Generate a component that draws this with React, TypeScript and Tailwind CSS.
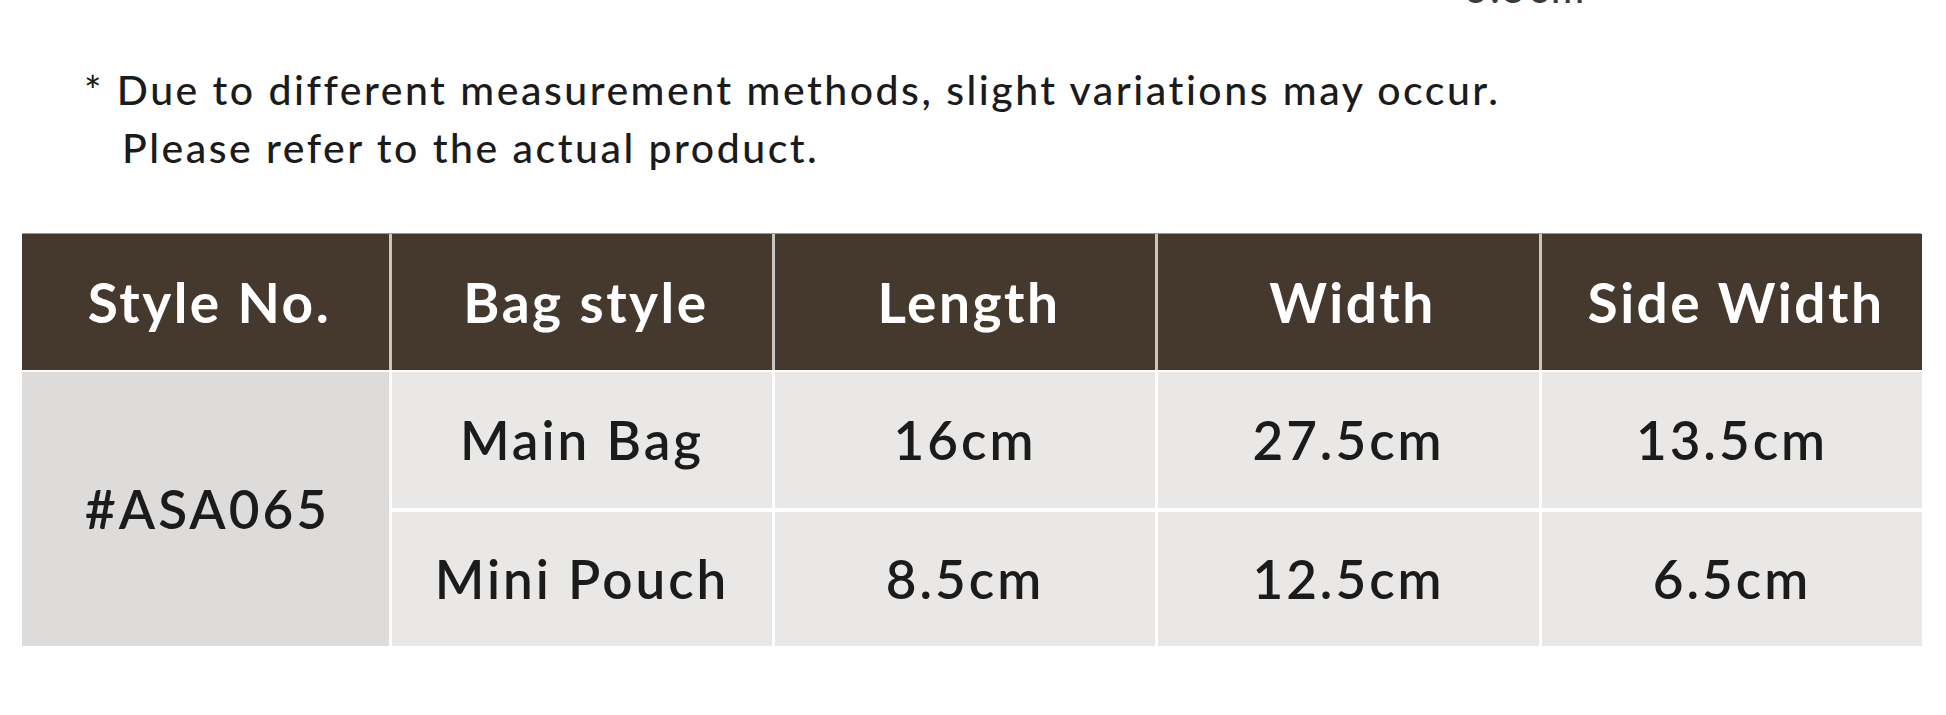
import { FC, Fragment } from 'react';

const columns = ['Style No.', 'Bag style', 'Length', 'Width', 'Side Width'];

const rows = [
  { style: 'Main Bag', length: '16cm', width: '27.5cm', side: '13.5cm' },
  { style: 'Mini Pouch', length: '8.5cm', width: '12.5cm', side: '6.5cm' },
];

const gridCols = 'grid-cols-[367px_380px_380px_381px_380px]';
const bodyCell =
  'bg-[#e9e8e6] flex items-center justify-center text-[53px] font-semibold tracking-[3px]';

const App: FC = () => {
  return (
    <div className="w-[1946px] h-[715px] bg-white overflow-hidden font-['Lato','Liberation_Sans',sans-serif] text-[#1b1b1b]">
      {/* cut-off value from the block above */}
      <div className="h-[5px] overflow-hidden pl-[1464px]">
        <div className="-mt-[32px] text-[40px] leading-[40px] font-medium tracking-[3px] text-[#3a3a3a]">
          6.5cm
        </div>
      </div>

      {/* Note */}
      <div className="pt-[56px] pl-[84px] text-[41px] leading-[58px] font-medium tracking-[2.5px]">
        <p>* Due to different measurement methods, slight variations may occur.</p>
        <p className="pl-[38px]">Please refer to the actual product.</p>
      </div>

      {/* Size table */}
      <div className="ml-[22px] mt-[56px] w-[1899px]">
        <div className={`grid ${gridCols} gap-x-[3px] bg-[#c9c5c1] border-t border-[#9d9892]`}>
          {columns.map((col) => (
            <div
              key={col}
              className="h-[136px] bg-[#45392e] flex items-center justify-center pl-[8px] text-white text-[55px] font-bold tracking-[2.5px]"
            >
              {col}
            </div>
          ))}
        </div>

        <div className={`grid ${gridCols} grid-rows-[136px_134px] gap-x-[3px] gap-y-[4px] bg-white pt-[2px]`}>
          <div className="row-span-2 bg-[#dddcdb] flex items-center justify-center pl-[4px] text-[53px] font-semibold tracking-[3px]">
            #ASA065
          </div>
          {rows.map((row) => (
            <Fragment key={row.style}>
              <div className={bodyCell}>{row.style}</div>
              <div className={bodyCell}>{row.length}</div>
              <div className={bodyCell}>{row.width}</div>
              <div className={bodyCell}>{row.side}</div>
            </Fragment>
          ))}
        </div>
      </div>
    </div>
  );
};

export default App;
